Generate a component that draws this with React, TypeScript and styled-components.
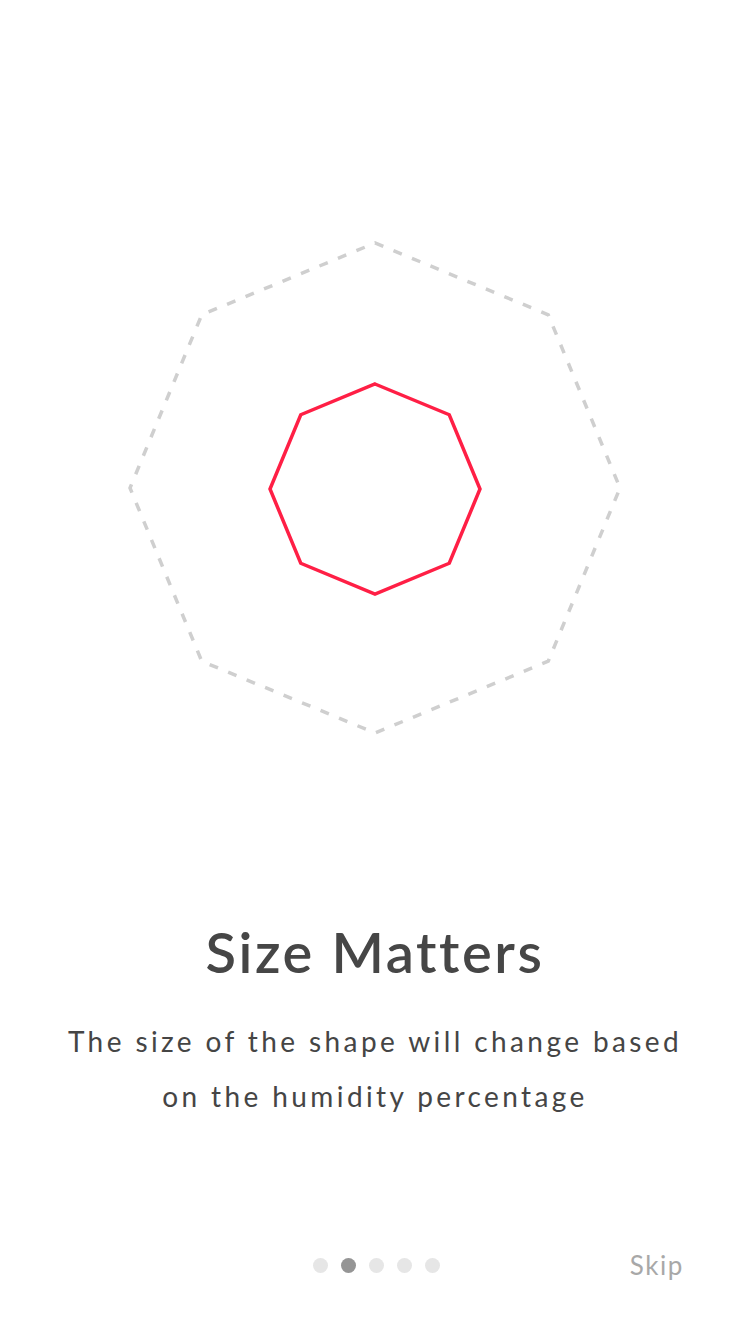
import React from "react";
import styled, { createGlobalStyle } from "styled-components";

const Global = createGlobalStyle`
  html, body { margin: 0; padding: 0; background: #ffffff; }
  body { font-family: "Lato", "Open Sans", sans-serif; }
`;

const Page = styled.div`
  width: 750px;
  height: 1334px;
  display: flex;
  flex-direction: column;
  align-items: center;
  background: #ffffff;
  box-sizing: border-box;
`;

const Hero = styled.div`
  padding-top: 238px;
  width: 500px;
  height: 500px;
  display: flex;
  justify-content: center;
`;

const Title = styled.h1`
  margin: 182px 0 0;
  font-family: "Lato", sans-serif;
  font-weight: 600;
  font-size: 56px;
  line-height: 64px;
  color: #464646;
  letter-spacing: 2.6px;
`;

const Body = styled.p`
  margin: 30px 0 0;
  width: 640px;
  text-align: center;
  font-family: "Lato", sans-serif;
  font-weight: 400;
  font-size: 28px;
  line-height: 55px;
  color: #454545;
  letter-spacing: 3.4px;
`;

const Footer = styled.div`
  margin-top: auto;
  margin-bottom: 54px;
  width: 100%;
  position: relative;
  height: 30px;
  display: flex;
  justify-content: center;
  align-items: center;
`;

const Dots = styled.div`
  display: flex;
  gap: 13px;
  margin-left: 2px;
`;

const Dot = styled.span<{ $active?: boolean }>`
  width: 15px;
  height: 15px;
  border-radius: 50%;
  background: ${(p) => (p.$active ? "#959595" : "#e6e6e6")};
`;

const Skip = styled.button`
  position: absolute;
  right: 66px;
  top: 50%;
  transform: translateY(-50%);
  border: 0;
  background: none;
  padding: 0;
  font-family: "Lato", sans-serif;
  font-size: 26px;
  color: #a8a8a8;
  letter-spacing: 1.6px;
  cursor: pointer;
`;

function octagon(cx: number, cy: number, r: number) {
  const pts: string[] = [];
  for (let i = 0; i < 8; i++) {
    const a = (-90 + i * 45) * (Math.PI / 180);
    pts.push(`${(cx + r * Math.cos(a)).toFixed(2)},${(cy + r * Math.sin(a)).toFixed(2)}`);
  }
  return pts.join(" ");
}

export default function App() {
  return (
    <>
      <Global />
      <Page>
        <Hero>
          <svg width="500" height="500" viewBox="0 0 500 500">
            <polygon
              points={octagon(250, 250, 245)}
              fill="none"
              stroke="#cfcfcf"
              strokeWidth={3.5}
              strokeDasharray="9 11"
            />
            <polygon
              points={octagon(250, 251, 105)}
              fill="none"
              stroke="#ff1f45"
              strokeWidth={3.5}
              strokeLinejoin="miter"
            />
          </svg>
        </Hero>
        <Title>Size Matters</Title>
        <Body>The size of the shape will change based on the humidity percentage</Body>
        <Footer>
          <Dots>
            <Dot />
            <Dot $active />
            <Dot />
            <Dot />
            <Dot />
          </Dots>
          <Skip>Skip</Skip>
        </Footer>
      </Page>
    </>
  );
}
